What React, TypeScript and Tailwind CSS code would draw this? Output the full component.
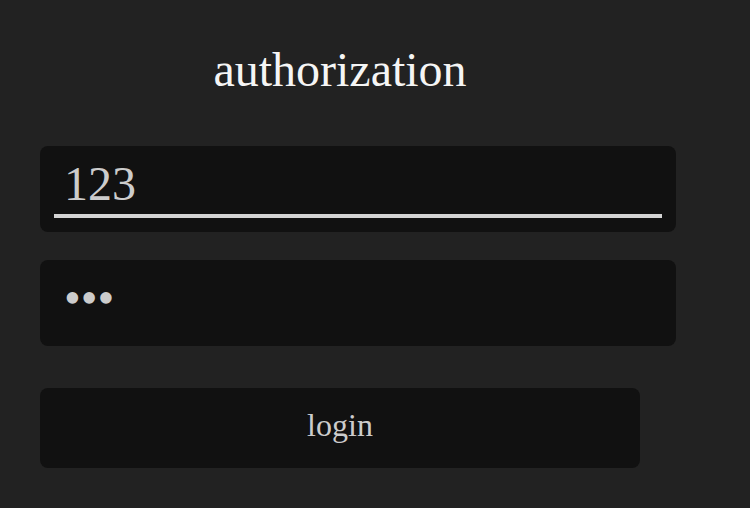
import React from "react"

export default function App() {
  return (
    <div className="min-h-[508px] w-[750px] bg-[#222222] font-['Liberation_Serif',serif]">
      <div className="flex w-[636px] flex-col pl-[40px] pt-[43px]">
        {/* Title */}
        <h1 className="w-[600px] text-center text-[48px] leading-[53px] text-[#f5f5f5]">authorization</h1>

        {/* Login field */}
        <div className="mt-[50px] h-[86px] w-[636px] rounded-lg bg-[#111111] px-[14px] pt-[8px]">
          <input
            readOnly
            value="123"
            className="h-[64px] w-full border-b-4 border-[#d4d4d4] bg-transparent px-[10px] font-['Liberation_Serif',serif] text-[48px] text-[#cccccc] outline-none"
          />
        </div>

        {/* Password field */}
        <div className="mt-[28px] h-[86px] w-[636px] rounded-lg bg-[#111111] px-[14px] pt-[8px]">
          <input
            readOnly
            type="password"
            value="123"
            className="h-[64px] w-full border-b-4 border-transparent bg-transparent px-[10px] font-['Liberation_Serif',serif] text-[48px] text-[#cccccc] outline-none"
          />
        </div>

        {/* Submit */}
        <button className="mt-[42px] h-[80px] w-[600px] rounded-lg bg-[#111111] pb-[6px] font-['Liberation_Serif',serif] text-[32px] text-[#cccccc]">
          login
        </button>
      </div>
    </div>
  )
}
